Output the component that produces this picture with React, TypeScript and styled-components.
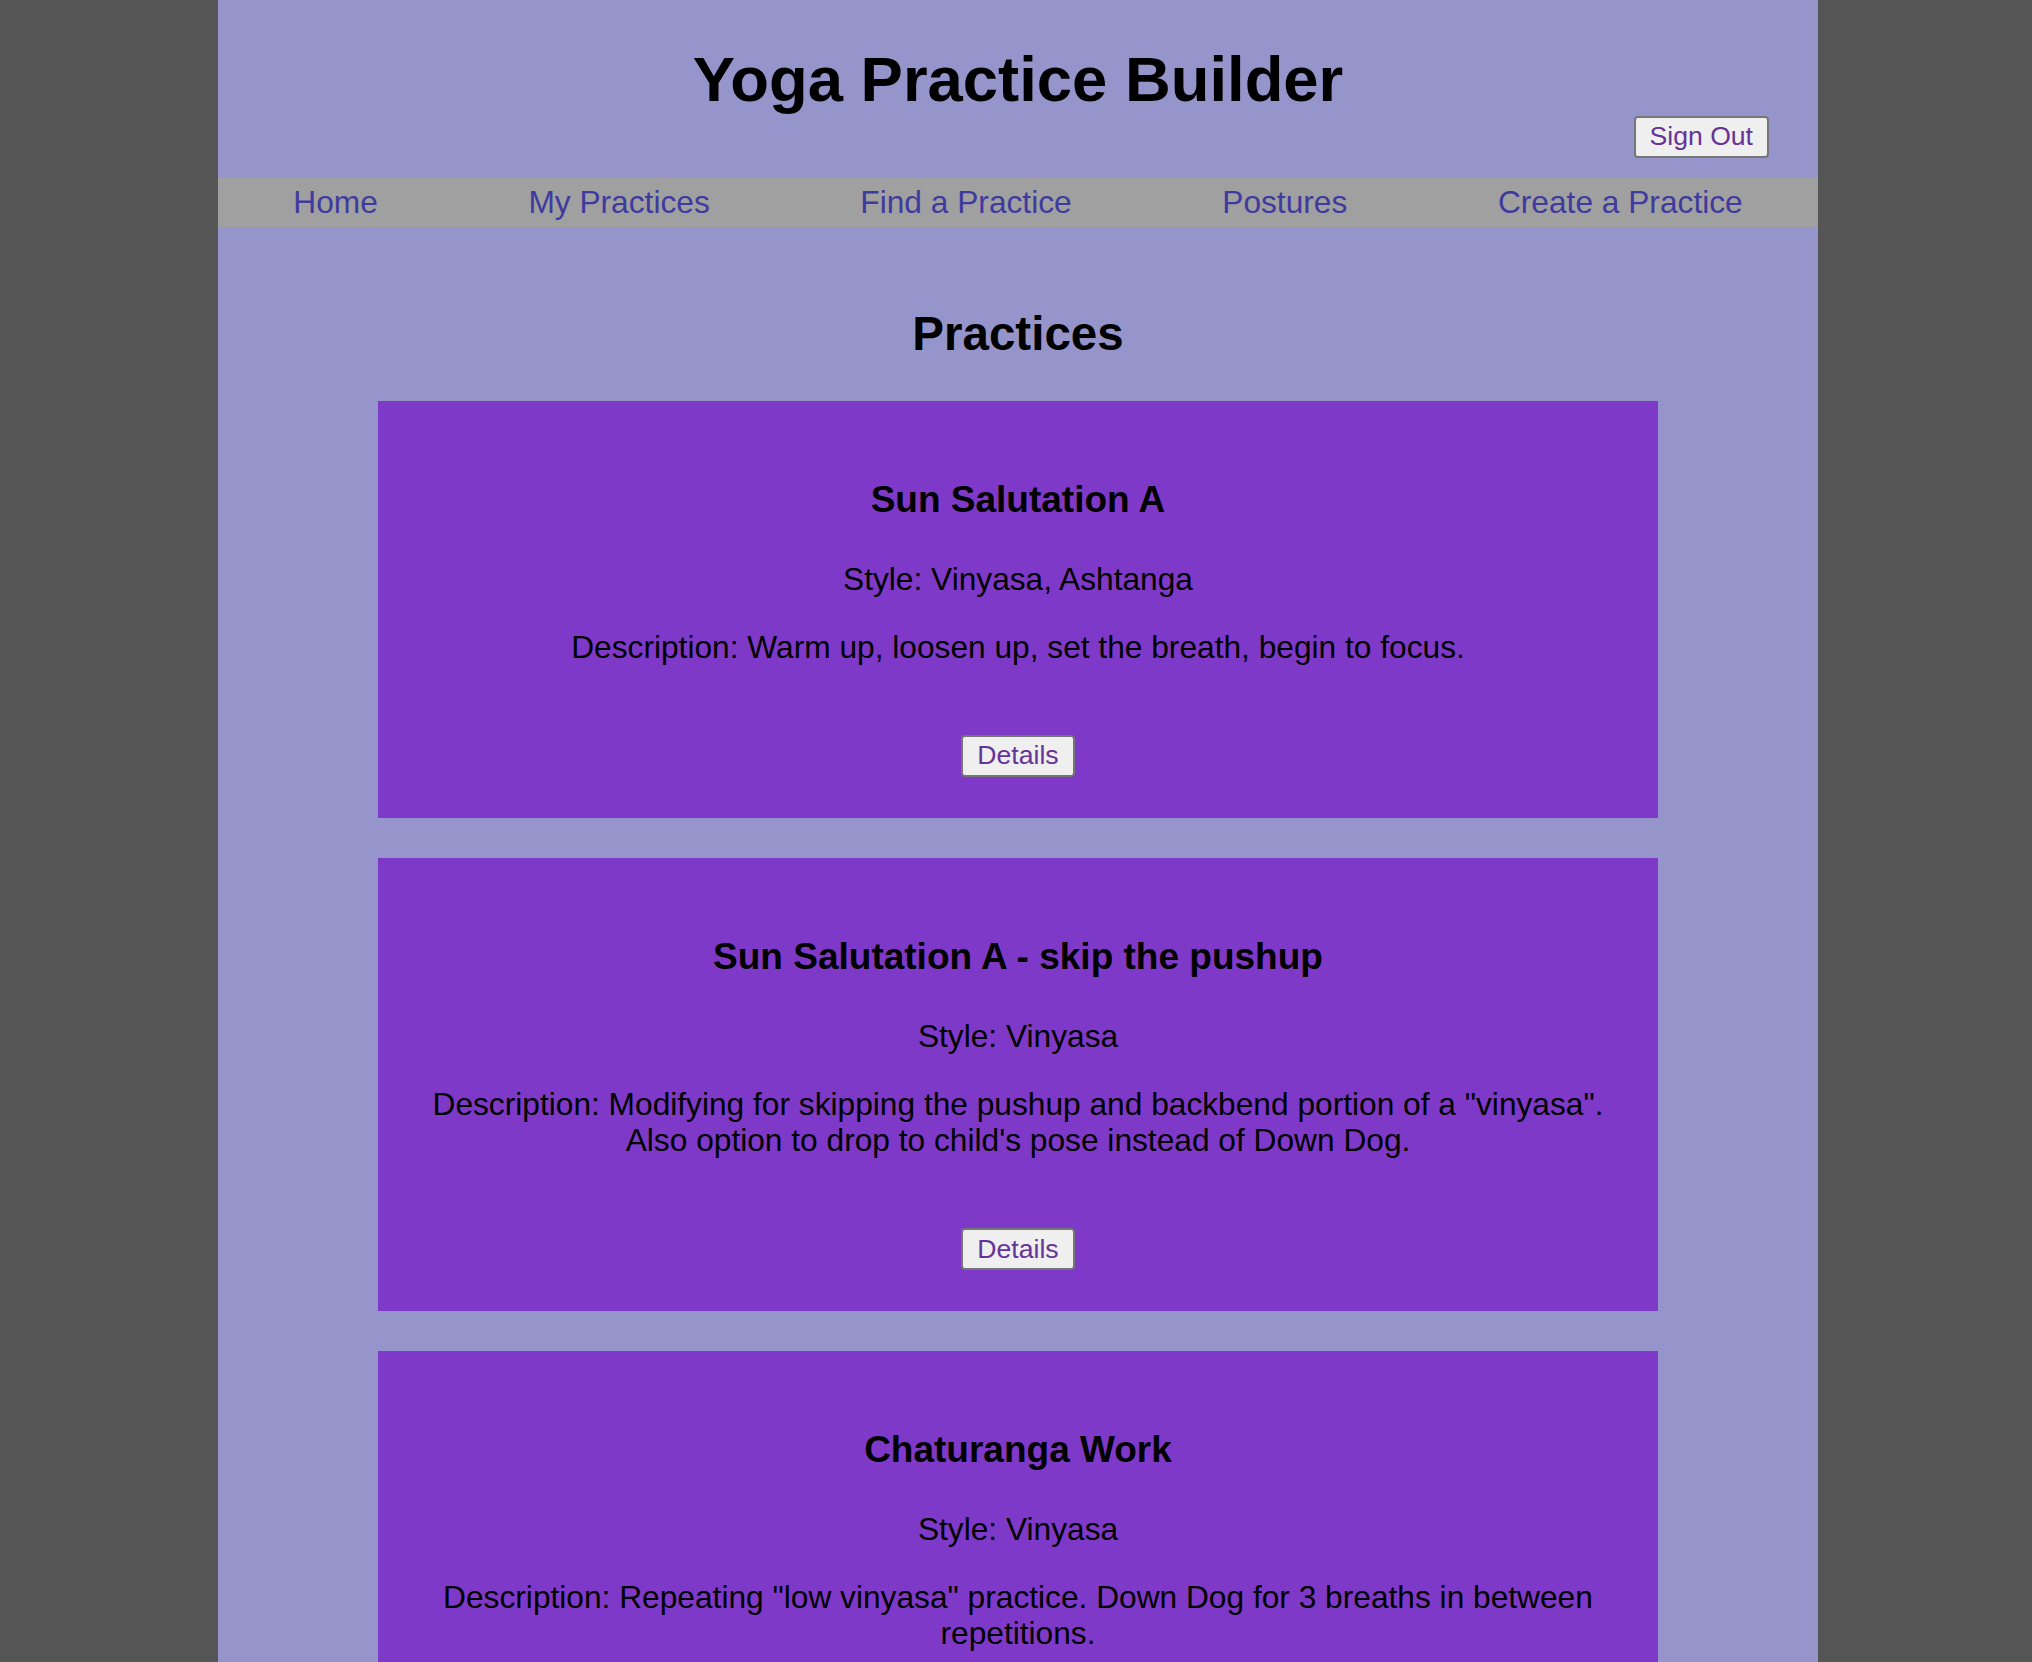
import React from "react";
import styled, { createGlobalStyle } from "styled-components";

const GlobalStyle = createGlobalStyle`
  html {
    scrollbar-width: none;
  }
  html, body {
    margin: 0;
    padding: 0;
    background: #555555;
  }
  body {
    padding-left: 4px;
    font-family: "Liberation Sans", Arial, Helvetica, sans-serif;
    font-size: 31.7px;
    color: #000;
  }
`;

const Page = styled.div`
  width: 1600px;
  margin: 0 auto;
  min-height: 100vh;
  background: #9595cc;
  text-align: center;
  display: flow-root;
`;

const Header = styled.header`
  display: flow-root;
  padding: 42.5px 49px 20px;
`;

const Title = styled.h1`
  margin: 0;
  font-size: 63.4px;
  line-height: 73px;
  font-weight: 700;
`;

const HeaderActions = styled.div`
  display: flex;
  justify-content: flex-end;
`;

const Button = styled.button`
  font-family: "Liberation Sans", Arial, Helvetica, sans-serif;
  font-size: 26.6px;
  line-height: 31px;
  color: #663399;
  background: #efefef;
  border: 2px solid #767676;
  border-radius: 4px;
  padding: 3.5px 14px;
  cursor: pointer;
`;

const Nav = styled.nav`
  display: flex;
  justify-content: space-around;
  background: #a0a0a0;
  padding: 6.3px 0;
`;

const NavLink = styled.a`
  color: #3f3b9e;
  text-decoration: none;
  font-size: 31.7px;
  line-height: 36.4px;
`;

const Main = styled.main`
  display: flow-root;
  padding-top: 41px;
`;

const SectionTitle = styled.h2`
  margin: 39.5px 0;
  font-size: 47.5px;
  line-height: 54.6px;
  font-weight: 700;
`;

const CardList = styled.div`
  display: flex;
  flex-direction: column;
  gap: 40px;
  width: 1280px;
  margin: 0 auto;
  padding-bottom: 40px;
`;

const Card = styled.section`
  background: #7f39c8;
  padding: 41px 41px;
  display: flow-root;
`;

const CardTitle = styled.h3`
  margin: 37px 0 0;
  font-size: 37px;
  line-height: 42.5px;
  font-weight: 700;
`;

const CardText = styled.p<{ $gap: number }>`
  margin: ${(p) => p.$gap}px 0 0;
  font-size: 31.7px;
  line-height: 36.4px;
`;

const CardActions = styled.div`
  margin-top: 69.5px;
  display: flex;
  justify-content: center;
`;

const practices = [
  {
    name: "Sun Salutation A",
    style: "Vinyasa, Ashtanga",
    description: "Warm up, loosen up, set the breath, begin to focus.",
  },
  {
    name: "Sun Salutation A - skip the pushup",
    style: "Vinyasa",
    description:
      'Modifying for skipping the pushup and backbend portion of a "vinyasa". Also option to drop to child\'s pose instead of Down Dog.',
  },
  {
    name: "Chaturanga Work",
    style: "Vinyasa",
    description:
      'Repeating "low vinyasa" practice. Down Dog for 3 breaths in between repetitions.',
  },
];

const navItems = ["Home", "My Practices", "Find a Practice", "Postures", "Create a Practice"];

export default function App() {
  return (
    <>
      <GlobalStyle />
      <Page>
        <Header>
          <Title>Yoga Practice Builder</Title>
          <HeaderActions>
            <Button>Sign Out</Button>
          </HeaderActions>
        </Header>
        <Nav>
          {navItems.map((item) => (
            <NavLink key={item} href="#">
              {item}
            </NavLink>
          ))}
        </Nav>
        <Main>
          <SectionTitle>Practices</SectionTitle>
          <CardList>
            {practices.map((p) => (
              <Card key={p.name}>
                <CardTitle>{p.name}</CardTitle>
                <CardText $gap={39.3}>Style: {p.style}</CardText>
                <CardText $gap={31.7}>Description: {p.description}</CardText>
                <CardActions>
                  <Button>Details</Button>
                </CardActions>
              </Card>
            ))}
          </CardList>
        </Main>
      </Page>
    </>
  );
}
